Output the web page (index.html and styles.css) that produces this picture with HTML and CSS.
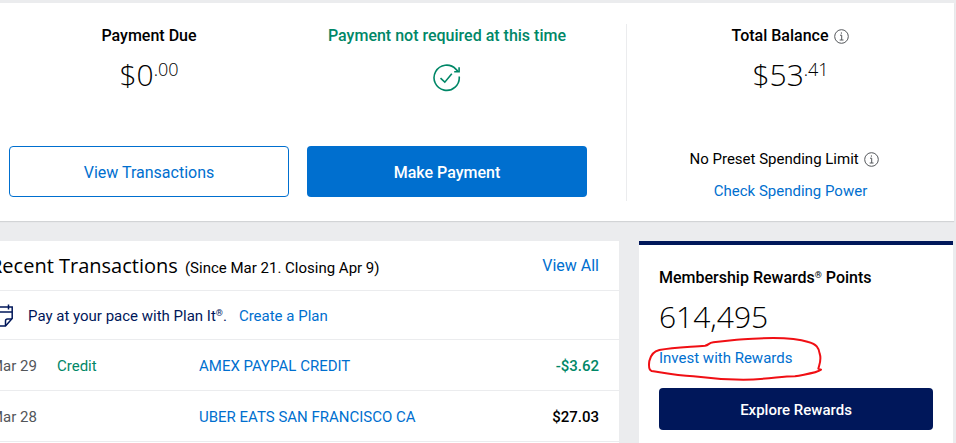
FILE: index.html
```html
<!DOCTYPE html>
<html lang="en">
<head>
<meta charset="utf-8">
<meta name="viewport" content="width=device-width, initial-scale=1">
<title>Account Summary</title>
<link rel="stylesheet" href="styles.css">
</head>
<body>
<main class="page">
  <section class="summary">
    <div class="payments">
      <div class="cell">
        <h2 class="label">Payment Due</h2>
        <p class="amount">$0<span class="cents">.00</span></p>
        <button class="btn btn-outline" type="button">View Transactions</button>
      </div>
      <div class="cell">
        <h2 class="label label-ok">Payment not required at this time</h2>
        <svg class="status-icon" viewBox="0 0 28 28" aria-hidden="true">
          <path d="M26.2 12.5A12.6 12.6 0 1 1 22.8 5.1L25 7.4"/>
          <path d="M26.1 3.2V7.8H21.2"/>
          <path d="M7.5 14.2L11.8 18.2L18.8 9.8"/>
        </svg>
        <button class="btn btn-primary" type="button">Make Payment</button>
      </div>
    </div>
    <div class="balance">
      <h2 class="label">Total Balance
        <svg class="info" viewBox="0 0 15 15" aria-hidden="true"><circle cx="7.5" cy="7.5" r="6.8"/><path d="M6 6.2H7.7V11M5.7 11H9.5M7.4 3.4V4.7"/></svg>
      </h2>
      <p class="amount">$53<span class="cents">.41</span></p>
      <div class="spending">
        <p class="limit">No Preset Spending Limit
          <svg class="info" viewBox="0 0 15 15" aria-hidden="true"><circle cx="7.5" cy="7.5" r="6.8"/><path d="M6 6.2H7.7V11M5.7 11H9.5M7.4 3.4V4.7"/></svg>
        </p>
        <a href="#power">Check Spending Power</a>
      </div>
    </div>
  </section>

  <div class="details">
    <section class="transactions">
      <header class="tx-head">
        <h2 class="tx-title">Recent Transactions <span class="period">(Since Mar 21. Closing Apr 9)</span></h2>
        <a class="view-all" href="#all">View All</a>
      </header>
      <div class="plan">
        <svg class="calendar" viewBox="0 0 24 24" aria-hidden="true">
          <path d="M2 3H22.2V14.5L15.5 22H4Q2 22 2 20Z"/>
          <path d="M2 8H22M6 .5V5.5M18.5 .5V5.5M15.5 22V17Q15.5 15 17.5 15H22"/>
        </svg>
        <p>Pay at your pace with Plan It<sup>®</sup>.</p>
        <a href="#plan">Create a Plan</a>
      </div>
      <table class="tx-table">
        <tbody>
          <tr><td class="date">Mar 29</td><td class="kind">Credit</td><td><a href="#tx1">AMEX PAYPAL CREDIT</a></td><td class="sum credit">-$3.62</td></tr>
          <tr><td class="date">Mar 28</td><td class="kind"></td><td><a href="#tx2">UBER EATS SAN FRANCISCO CA</a></td><td class="sum">$27.03</td></tr>
        </tbody>
      </table>
    </section>

    <section class="rewards">
      <h2 class="rewards-title">Membership Rewards<sup>®</sup> Points</h2>
      <p class="points">614,495</p>
      <div class="invest">
        <a href="#invest">Invest with Rewards</a>
        <svg class="marker" viewBox="45 342 540 150" aria-hidden="true">
          <path d="M65 450C56 447 56 434 58 420C62 402 70 391 88 387C130 378 180 378 225 374C238 372 234 366 250 364L320 356C360 355 390 351 430 351C480 351 510 355 535 363C560 370 566 380 569 398C575 415 570 425 565 443L573 446C560 456 535 458 495 466C450 466 420 475 340 476C280 476 220 470 190 466C140 463 110 457 65 450Z"/>
        </svg>
      </div>
      <button class="btn btn-navy" type="button">Explore Rewards</button>
    </section>
  </div>
</main>
</body>
</html>
```

FILE: styles.css
```css
* {
  box-sizing: border-box;
}

body {
  margin: 0;
  overflow-x: hidden;
  background: #ebecee;
  color: #000;
  font: 15px/20px Roboto, "Liberation Sans", sans-serif;
}

h2,
p {
  margin: 0;
  font-weight: 400;
}

a {
  color: #006fcf;
  text-decoration: none;
}

sup {
  font-size: 9px;
  line-height: 0;
  vertical-align: 5px;
}

.page {
  display: flex;
  flex-direction: column;
  gap: 20px;
  min-height: 100vh;
  padding-top: 3px;
}

.summary {
  display: grid;
  grid-template-columns: 627fr 327fr;
  margin-right: 2px;
  padding: 21px 0 20px;
  background: #fff;
  box-shadow: 0 1px 1px #d2d4d6;
}

.payments {
  display: grid;
  grid-template-columns: 1fr 1fr;
  gap: 18px;
  padding: 0 39px 4px 9px;
  border-right: 1px solid #ebecee;
}

.cell,
.balance {
  display: flex;
  flex-direction: column;
  align-items: center;
}

.label {
  font-size: 16px;
  font-weight: 500;
  line-height: 24px;
}

.label-ok {
  color: #008767;
}

.amount {
  margin-top: 7px;
  font: 300 30px/40px "Open Sans", "Noto Sans", sans-serif;
}

.cents {
  font-size: 18px;
  line-height: 0;
  vertical-align: 10px;
}

.btn {
  width: 100%;
  padding: 2px 8px 0;
  border: 0;
  border-radius: 4px;
  font: 500 16px/24px Roboto, "Liberation Sans", sans-serif;
}

.cell .btn {
  height: 51px;
  margin-top: auto;
}

.btn-outline {
  border: 1px solid #006fcf;
  background: #fff;
  color: #006fcf;
  font-weight: 400;
}

.btn-primary {
  background: #006fcf;
  color: #fff;
}

.status-icon {
  width: 28px;
  height: 28px;
  margin-top: 16px;
  fill: none;
  stroke: #008767;
  stroke-width: 1.6;
}

.info {
  width: 15px;
  height: 15px;
  margin-left: 2px;
  vertical-align: -3px;
  fill: none;
  stroke: #53565a;
  stroke-width: 1;
}

.spending {
  display: flex;
  flex-direction: column;
  align-items: center;
  gap: 12px;
  margin-top: 54px;
}

.limit {
  padding-right: 12px;
}

.details {
  display: grid;
  flex: 1;
  grid-template-columns: 619fr 314fr;
  gap: 20px;
  margin-right: 3px;
}

.transactions {
  margin-left: -30px;
  background: #fff;
}

.tx-head,
.plan {
  display: flex;
  align-items: center;
  padding: 0 20px;
  border-bottom: 1px solid #ebecee;
}

.tx-head {
  justify-content: space-between;
  height: 50px;
}

.tx-title {
  font: 400 20px/28px "Open Sans", "Noto Sans", sans-serif;
}

.period {
  margin-left: 2px;
  font: 15px/20px Roboto, "Liberation Sans", sans-serif;
}

.view-all {
  font-size: 16px;
}

.plan {
  gap: 12px;
  height: 49px;
  padding-top: 2px;
  color: #00175a;
}

.calendar {
  width: 24px;
  height: 24px;
  margin-right: 2px;
  fill: none;
  stroke: #00175a;
  stroke-width: 1.5;
}

.tx-table {
  width: 100%;
  border-collapse: separate;
  border-spacing: 0;
}

.tx-table td {
  height: 51px;
  padding: 2px 0 0;
  border-bottom: 1px solid #ebecee;
}

.tx-table .date {
  width: 87px;
  padding-left: 20px;
  color: #53565a;
}

.tx-table .kind {
  width: 142px;
  color: #008767;
}

.tx-table .sum {
  padding-right: 20px;
  font-weight: 500;
  text-align: right;
}

.tx-table .credit {
  color: #008767;
}

.rewards {
  padding: 21px 20px 20px;
  border-top: 4px solid #00175a;
  background: #fff;
}

.rewards-title {
  font-size: 16px;
  font-weight: 500;
  line-height: 24px;
}

.points {
  margin-top: 7px;
  font: 300 30px/40px "Open Sans", "Noto Sans", sans-serif;
}

.invest {
  position: relative;
  margin-top: 11px;
}

.marker {
  position: absolute;
  top: -13px;
  left: -14px;
  width: 180px;
  height: 50px;
  fill: none;
  stroke: #f00f14;
  stroke-width: 6;
  stroke-linejoin: round;
  pointer-events: none;
}

.btn-navy {
  height: 42px;
  margin-top: 20px;
  background: #00175a;
  color: #fff;
  font-size: 15px;
}
```
